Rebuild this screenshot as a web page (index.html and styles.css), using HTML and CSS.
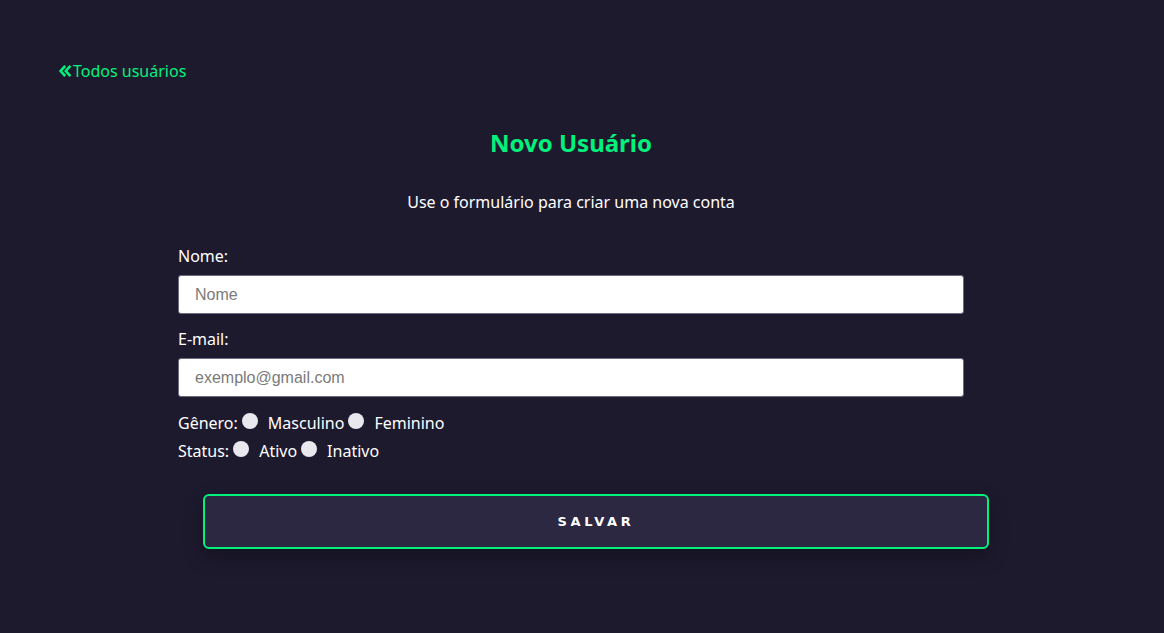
FILE: index.html
```html
<!DOCTYPE html>
<html lang="pt-BR">
<head>
<meta charset="utf-8">
<title>Novo Usuário</title>
<link rel="stylesheet" href="styles.css">
</head>
<body>
<div class="page">
  <a class="back" href="#">
    <svg class="back-icon" viewBox="0 0 14 14" width="14" height="14" aria-hidden="true"><path d="M7.2 1.8 L2.6 7 L7.2 12.2 M12.4 1.8 L7.8 7 L12.4 12.2" fill="none" stroke="currentColor" stroke-width="2.6" stroke-linecap="butt"/></svg>Todos usuários
  </a>
  <main class="content">
    <h1 class="title">Novo Usuário</h1>
    <p class="subtitle">Use o formulário para criar uma nova conta</p>
    <form class="form">
      <label class="label" for="nome">Nome:</label>
      <input class="input" id="nome" type="text" placeholder="Nome">
      <label class="label" for="email">E-mail:</label>
      <input class="input" id="email" type="email" placeholder="exemplo@gmail.com">
      <div class="radio-row">
        <span>Gênero:</span>
        <input class="radio" type="radio" name="genero" id="m"><label for="m">Masculino</label>
        <input class="radio" type="radio" name="genero" id="f"><label for="f">Feminino</label>
      </div>
      <div class="radio-row">
        <span>Status:</span>
        <input class="radio" type="radio" name="status" id="a"><label for="a">Ativo</label>
        <input class="radio" type="radio" name="status" id="i"><label for="i">Inativo</label>
      </div>
      <button class="save" type="button">SALVAR</button>
    </form>
  </main>
</div>
</body>
</html>
```
FILE: styles.css
```css
html, body {
  margin: 0;
  padding: 0;
  background: #1e1a2e;
  height: 100%;
}
body {
  font-family: "Noto Sans", "Open Sans", sans-serif;
  color: #ffffff;
  font-size: 16px;
}
.page {
  padding: 58px 80px 0 58px;
}
.back {
  display: inline-flex;
  align-items: center;
  color: #00f27d;
  text-decoration: none;
  font-size: 16px;
  line-height: 24px;
  margin-top: 1px;
}
.back-icon {
  display: block;
  margin-right: 1px;
}
.content {
  display: flex;
  flex-direction: column;
  align-items: center;
}
.title {
  color: #00f27d;
  font-size: 24px;
  font-weight: 700;
  margin: 44px 0 0 0;
  line-height: 32px;
}
.subtitle {
  margin: 31px 0 0 0;
  font-size: 16px;
  line-height: 24px;
}
.form {
  width: 786px;
  display: flex;
  flex-direction: column;
  margin-top: 30px;
}
.label {
  line-height: 24px;
  margin-bottom: 7px;
}
.input {
  box-sizing: border-box;
  height: 39px;
  width: 100%;
  border: 1px solid #6e6a86;
  border-radius: 3px;
  background: #fff;
  padding: 0 16px;
  font-family: "Liberation Sans", Arial, sans-serif;
  font-size: 16px;
  color: #333;
  margin-bottom: 13px;
  outline: none;
}
.input::placeholder {
  color: #7a7a7a;
}
.radio-row {
  display: flex;
  align-items: center;
  line-height: 28px;
  height: 28px;
}
.radio-row:first-of-type {
  margin-top: -1px;
}
.radio {
  appearance: none;
  -webkit-appearance: none;
  width: 16px;
  height: 16px;
  border-radius: 50%;
  background: #e8e8ee;
  margin: 0 10px 4px 4px;
  padding: 0;
  border: none;
}
.radio-row label + .radio {
  margin-left: 4px;
}
.save {
  box-sizing: border-box;
  align-self: flex-start;
  margin: 29px 0 0 25px;
  width: 786px;
  height: 55px;
  background: #2d2841;
  border: 2px solid #00f27d;
  border-radius: 6px;
  color: #fff;
  font-family: "DejaVu Sans", Verdana, sans-serif;
  font-weight: 700;
  font-size: 13px;
  letter-spacing: 3.6px;
  box-shadow: 0 8px 20px rgba(0,0,0,0.3);
  cursor: pointer;
}
```
